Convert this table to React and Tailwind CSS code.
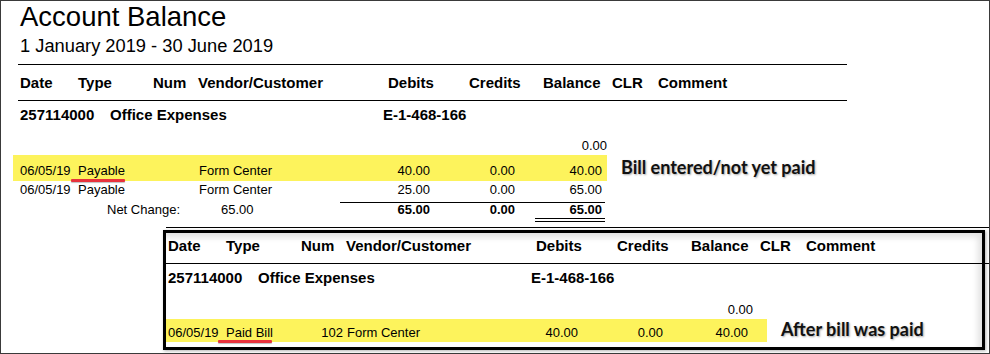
import React from "react";

function HeaderRow() {
  return (
    <div className="flex h-[35px] items-center pl-[7px] text-[15px] font-bold leading-[35px]">
      <span className="w-[58px]">Date</span>
      <span className="w-[75px]">Type</span>
      <span className="w-[45px]">Num</span>
      <span className="w-[190px]">Vendor/Customer</span>
      <span className="w-[81px]">Debits</span>
      <span className="w-[74px]">Credits</span>
      <span className="w-[69px]">Balance</span>
      <span className="w-[46px]">CLR</span>
      <span>Comment</span>
    </div>
  );
}

function AccountRow({ pl }) {
  return (
    <div className={`flex h-[28px] text-[15px] font-bold leading-[28px] ${pl}`}>
      <span className="w-[90px]">257114000</span>
      <span className="w-[273px]">Office Expenses</span>
      <span>E-1-468-166</span>
    </div>
  );
}

function Underline({ left }) {
  return (
    <span
      className={`absolute bottom-[-1px] h-[3px] w-[54px] rounded-[1px] bg-[#e8333d] shadow-[0_1px_1px_rgba(0,0,0,0.25)] ${left}`}
    />
  );
}

function Annotation({ children, pt }) {
  return (
    <div
      className={`ml-[14px] font-['Lato','Open_Sans',sans-serif] text-[18px] font-bold leading-[20px] text-[#111] [text-shadow:1px_1px_2px_rgba(0,0,0,0.35)] ${pt}`}
    >
      {children}
    </div>
  );
}

export default function App() {
  return (
    <div className="relative h-[354px] w-[990px] overflow-hidden border border-[#3a3a3a] bg-white font-['Liberation_Sans',Arial,sans-serif] text-black">
      {/* Title */}
      <div className="pl-[19px]">
        <div className="text-[27.5px] leading-[32px]">Account Balance</div>
        <div className="mt-[2px] text-[18.3px] leading-[22px]">1 January 2019 - 30 June 2019</div>
      </div>

      {/* Top table */}
      <div className="ml-[12px] mt-[7px]">
        <div className="ml-[5px] h-px w-[829px] bg-black" />
        <HeaderRow />
        <div className="ml-[5px] h-px w-[829px] bg-black" />
        <AccountRow pl="pl-[7px]" />
        <div className="w-[594px] pt-[8px] text-right text-[13px] leading-[18px]">0.00</div>

        <div className="flex items-start">
          <div className="flex h-[26px] w-[594px] bg-[#fdf35c] pl-[7px] pt-[6px] text-[13px] leading-[20px]">
            <span className="w-[58px]">06/05/19</span>
            <span className="relative w-[75px]">
              Payable
              <Underline left="left-[-7px]" />
            </span>
            <span className="w-[46px]" />
            <span className="w-[181px]">Form Center</span>
            <span className="w-[50px] text-right">40.00</span>
            <span className="w-[85px] text-right">0.00</span>
            <span className="w-[87px] text-right">40.00</span>
          </div>
          <Annotation pt="pt-[2px]">Bill entered/not yet paid</Annotation>
        </div>

        <div className="flex h-[17px] pl-[7px] text-[13px] leading-[17px]">
          <span className="w-[58px]">06/05/19</span>
          <span className="w-[75px]">Payable</span>
          <span className="w-[46px]" />
          <span className="w-[181px]">Form Center</span>
          <span className="w-[50px] text-right">25.00</span>
          <span className="w-[85px] text-right">0.00</span>
          <span className="w-[87px] text-right">65.00</span>
        </div>

        <div className="mt-[4px] flex pl-[7px] text-[13px] leading-[13px]">
          <span className="w-[87px]" />
          <span className="w-[114px] pt-px">Net Change:</span>
          <span className="w-[119px] pt-px">65.00</span>
          <div className="flex w-[265px] border-t border-black font-bold">
            <span className="w-[90px] text-right">65.00</span>
            <span className="w-[85px] text-right">0.00</span>
            <div className="flex w-[90px] flex-col items-end">
              <span className="pr-[3px]">65.00</span>
              <div className="mt-[2px] h-px w-[70px] bg-black" />
              <div className="mt-[2px] h-px w-[70px] bg-black" />
            </div>
          </div>
        </div>
      </div>

      {/* Inner (after payment) table */}
      <div className="relative ml-[160px] mt-[5px]">
        <div className="ml-[5px] h-px w-[829px] bg-black" />
        <HeaderRow />
        <div className="ml-[5px] h-px w-[829px] bg-black" />
        <AccountRow pl="pl-[7px]" />
        <div className="w-[592px] pt-[9px] text-right text-[13px] leading-[18px]">0.00</div>

        <div className="ml-[2px] flex items-start">
          <div className="flex h-[23px] w-[604px] bg-[#fdf35c] pl-[5px] pt-[5px] text-[13px] leading-[18px]">
            <span className="w-[58px]">06/05/19</span>
            <span className="relative w-[75px]">
              Paid Bill
              <Underline left="left-[-8px]" />
            </span>
            <span className="w-[46px] pr-[4px] text-right">102</span>
            <span className="w-[181px]">Form Center</span>
            <span className="w-[50px] text-right">40.00</span>
            <span className="w-[85px] text-right">0.00</span>
            <span className="w-[85px] text-right">40.00</span>
          </div>
          <Annotation pt="pt-0">After bill was paid</Annotation>
        </div>

        {/* Highlight frame drawn over the pasted table */}
        <div className="pointer-events-none absolute left-[2px] top-[3px] h-[120px] w-[822px] border-[3px] border-black shadow-[inset_-4px_4px_6px_rgba(0,0,0,0.12),1px_1px_3px_rgba(0,0,0,0.3)]" />
      </div>
    </div>
  );
}
